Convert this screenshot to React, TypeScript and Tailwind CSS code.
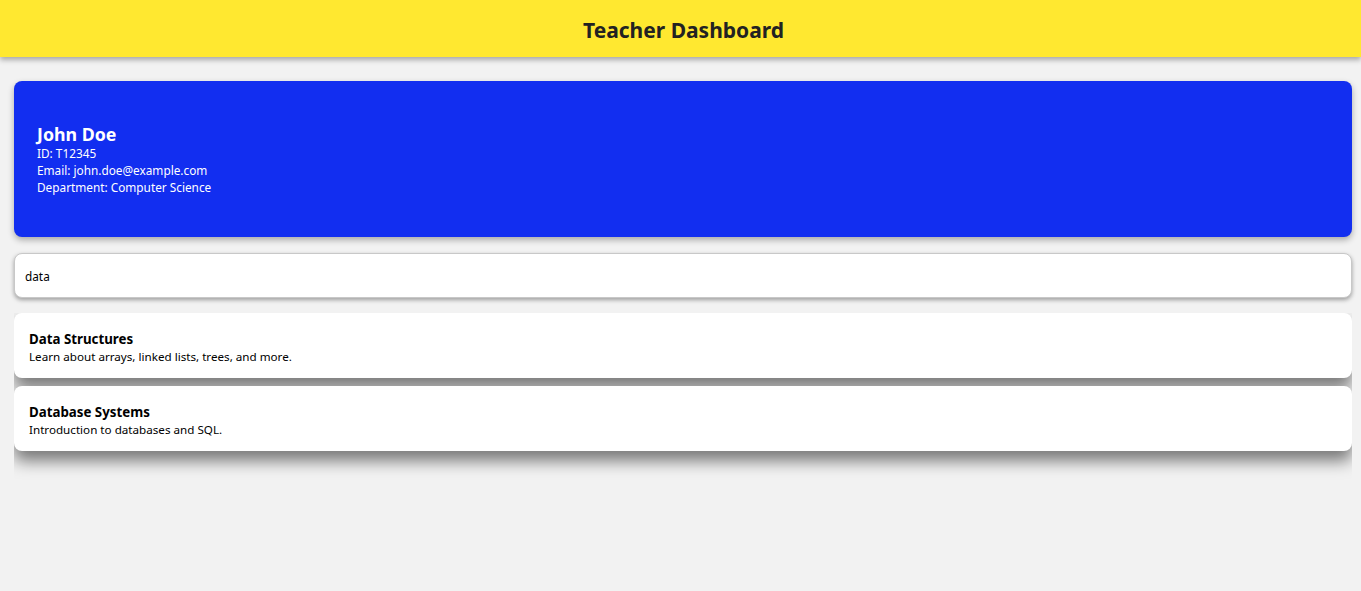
import React from "react";

const courses = [
  { title: "Data Structures", desc: "Learn about arrays, linked lists, trees, and more." },
  { title: "Database Systems", desc: "Introduction to databases and SQL." },
];

export default function App() {
  return (
    <div className="min-h-[591px] bg-[#f2f2f2]" style={{ fontFamily: '"Noto Sans", "Open Sans", sans-serif' }}>
      <header className="h-[57px] bg-[#ffe830] flex items-center justify-center pl-[6px] pt-[3px] shadow-[0_3px_5px_rgba(0,0,0,0.3)] relative">
        <h1 className="text-[21px] font-bold text-[#222] leading-none">Teacher Dashboard</h1>
      </header>
      <main className="pl-[14px] pr-[9px] pt-[24px]">
        <section className="h-[156px] bg-[#122ef0] rounded-[8px] shadow-[0_3px_6px_rgba(0,0,0,0.3)] px-[23px] pt-[2px] flex flex-col justify-center text-white">
          <h2 className="text-[17.8px] font-bold leading-[21px]">John Doe</h2>
          <p className="text-[11.8px] leading-[17px]">ID: T12345</p>
          <p className="text-[11.8px] leading-[17px]">Email: john.doe@example.com</p>
          <p className="text-[11.8px] leading-[17px]">Department: Computer Science</p>
        </section>
        <div className="mt-[16px] h-[45px] bg-white border border-[#c8c8c8] rounded-[8px] shadow-[0_2px_4px_rgba(0,0,0,0.35)] flex items-center px-[10px] pt-[3px]">
          <span className="text-[11.8px] text-black">data</span>
        </div>
        <div className="mt-[15px] overflow-hidden pb-[30px] flex flex-col gap-[8px]">
          {courses.map((c) => (
            <div
              key={c.title}
              className="h-[65px] bg-white rounded-[8px] shadow-[0_10px_16px_rgba(0,0,0,0.5)] px-[15px] pt-[4px] flex flex-col justify-center relative"
            >
              <h3 className="text-[13.3px] font-bold leading-[18px] text-black">{c.title}</h3>
              <p className="text-[11.65px] leading-[18px] text-black">{c.desc}</p>
            </div>
          ))}
        </div>
      </main>
    </div>
  );
}
